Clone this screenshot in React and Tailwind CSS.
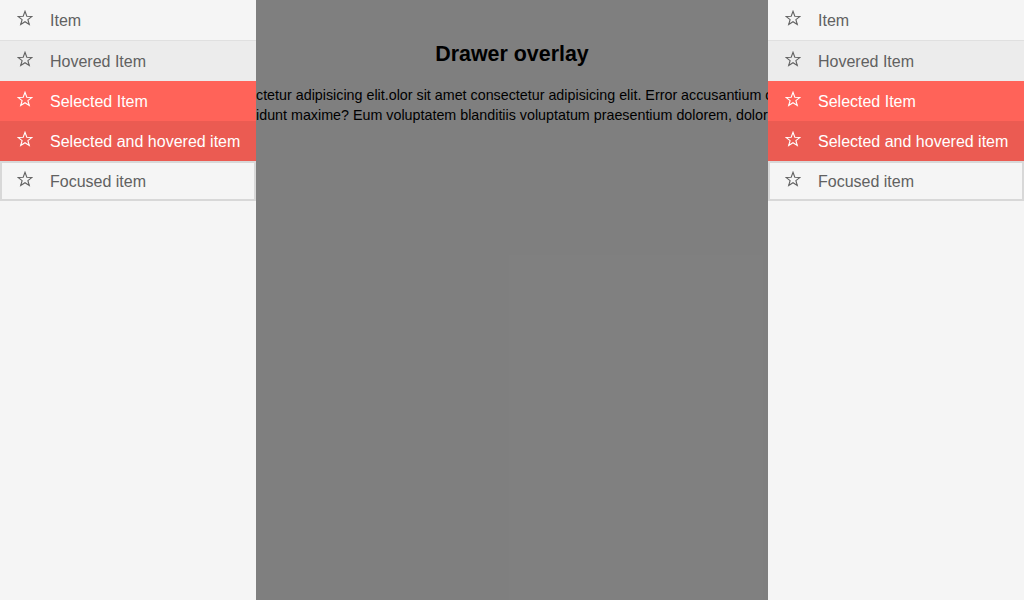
const items = [
  { label: 'Item', cls: 'h-[41px] bg-[#f5f5f5] text-[#616161] border-b border-[#e0e0e0]' },
  { label: 'Hovered Item', cls: 'h-10 bg-[#ececec] text-[#616161]' },
  { label: 'Selected Item', cls: 'h-10 bg-[#ff6359] text-white' },
  { label: 'Selected and hovered item', cls: 'h-10 bg-[#eb5b52] text-white' },
  { label: 'Focused item', cls: 'h-10 bg-[#f5f5f5] text-[#616161] border-2 border-[#d8d8d8]' },
];

function StarIcon() {
  return (
    <svg width="16" height="16" viewBox="0 0 16 16" fill="none" stroke="currentColor" strokeWidth="1.1" strokeLinejoin="miter">
      <polygon points="8,1.3 9.8,6.2 15,6.4 10.9,9.6 12.3,14.5 8,11.7 3.7,14.5 5.1,9.6 1,6.4 6.2,6.2" />
    </svg>
  );
}

function Drawer({ side }) {
  return (
    <aside className={`absolute top-0 ${side} h-full w-[256px] bg-[#f5f5f5]`}>
      <ul>
        {items.map((it, i) => (
          <li key={i} className={`flex items-center ${it.cls}`}>
            <span className={`mb-[5px] ${i === 4 ? 'ml-[15px]' : 'ml-[17px]'} flex w-4 shrink-0`}>
              <StarIcon />
            </span>
            <span className="ml-[17px] mt-[2px] text-base">{it.label}</span>
          </li>
        ))}
      </ul>
    </aside>
  );
}

export default function App() {
  return (
    <div className="relative h-[600px] w-[1024px] overflow-hidden bg-white" style={{ fontFamily: '"Liberation Sans", Arial, sans-serif' }}>
      {/* page content */}
      <main className="flex flex-col items-center pt-[40px]">
        <h1 className="text-[21.4px] font-bold leading-7 text-black">Drawer overlay</h1>
        <div className="mt-[17px] w-[512px] overflow-hidden text-[14.3px] leading-5 text-black">
          <p className="whitespace-nowrap">ctetur adipisicing elit.olor sit amet consectetur adipisicing elit. Error accusantium c</p>
          <p className="whitespace-nowrap">idunt maxime? Eum voluptatem blanditiis voluptatum praesentium dolorem, dolor</p>
        </div>
      </main>

      {/* overlay */}
      <div className="absolute inset-0 bg-black/50" />

      <Drawer side="left-0" />
      <Drawer side="right-0" />
    </div>
  );
}
